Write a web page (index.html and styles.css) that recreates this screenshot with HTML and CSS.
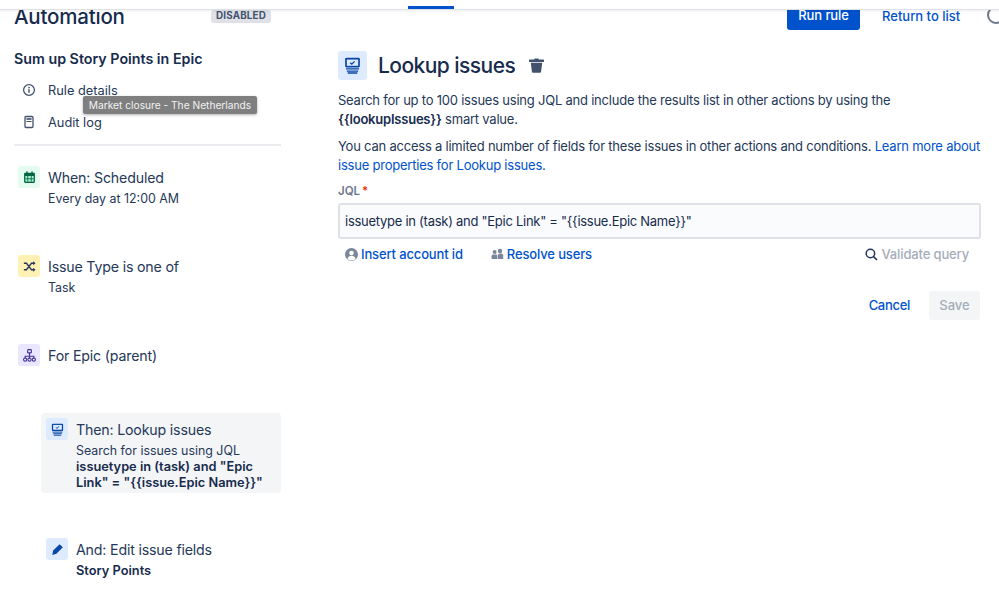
FILE: index.html
```html
<!DOCTYPE html>
<html lang="en">
<head>
<meta charset="utf-8">
<title>Automation</title>
<link rel="stylesheet" href="styles.css">
</head>
<body>
<div class="app">
  <header class="topbar"><span class="tab"></span></header>
  <div class="columns">
    <aside class="sidebar">
      <div class="side-head">
        <h1 class="app-title">Automation</h1>
        <span class="badge">DISABLED</span>
      </div>
      <h2 class="rule-name">Sum up Story Points in Epic</h2>
      <nav class="side-nav">
        <a class="nav-item">
          <svg class="nav-icon" viewBox="0 0 14 14"><circle cx="7" cy="7" r="5.4" fill="none" stroke="#42526e" stroke-width="1.3"/><rect x="6.3" y="6.2" width="1.4" height="3.6" fill="#42526e"/><circle cx="7" cy="4.6" r=".85" fill="#42526e"/></svg>
          <span>Rule details</span>
        </a>
        <a class="nav-item">
          <svg class="nav-icon" viewBox="0 0 14 14"><rect x="3" y="1.5" width="8" height="11" rx="1" fill="none" stroke="#42526e" stroke-width="1.3"/><rect x="4.4" y="3.2" width="5.2" height="1.6" fill="#42526e"/><rect x="4.4" y="6" width="5.2" height="1" fill="#42526e"/></svg>
          <span>Audit log</span>
        </a>
      </nav>
      <ol class="steps">
        <li class="step">
          <span class="step-icon green"><svg viewBox="0 0 12 12"><rect x="1" y="1.6" width="10" height="9.4" rx="1" fill="#006644"/><rect x="3" y=".4" width="1.3" height="2.4" fill="#006644"/><rect x="7.7" y=".4" width="1.3" height="2.4" fill="#006644"/><rect x="2.2" y="4.6" width="7.6" height="5.2" fill="#abf5d1"/><path d="M4.4 4.6v5.2M7.6 4.6v5.2M2.2 7.2h7.6" stroke="#006644" stroke-width=".8"/></svg></span>
          <div class="step-body">
            <div class="step-title">When: Scheduled</div>
            <div class="step-sub">Every day at 12:00 AM</div>
          </div>
        </li>
        <li class="step">
          <span class="step-icon yellow"><svg viewBox="0 0 12 12"><path d="M.8 3h2.4l4.6 6h2.4M.8 9h2.4l4.6-6h2.4" fill="none" stroke="#253858" stroke-width="1.2"/><path d="M9.4 1.2 11.6 3 9.4 4.8zM9.4 7.2 11.6 9 9.4 10.8z" fill="#253858"/></svg></span>
          <div class="step-body">
            <div class="step-title">Issue Type is one of</div>
            <div class="step-sub">Task</div>
          </div>
        </li>
        <li class="step short">
          <span class="step-icon purple"><svg viewBox="0 0 12 12"><path d="M6 3.5v3M2 9V6.7h8V9M6 6.5V9" fill="none" stroke="#403294" stroke-width="1"/><rect x="4.3" y=".6" width="3.4" height="3" rx=".7" fill="none" stroke="#403294" stroke-width="1"/><circle cx="2" cy="9.8" r="1.5" fill="none" stroke="#403294" stroke-width="1"/><circle cx="6" cy="9.8" r="1.5" fill="none" stroke="#403294" stroke-width="1"/><circle cx="10" cy="9.8" r="1.5" fill="none" stroke="#403294" stroke-width="1"/></svg></span>
          <div class="step-body">
            <div class="step-title">For Epic (parent)</div>
          </div>
        </li>
        <li class="step nested active">
          <span class="step-icon blue"><svg viewBox="0 0 12 12"><rect x=".8" y=".6" width="10.4" height="6.8" rx="1" fill="#0747a6"/><rect x="2" y="1.8" width="8" height="4.4" fill="#deebff"/><path d="m4.4 4 1.1 1 2-1.9" fill="none" stroke="#0747a6" stroke-width=".9"/><path d="M1.4 8.4h9.2M2 9.9h8M2.6 11.3h6.8" stroke="#0747a6" stroke-width=".9"/></svg></span>
          <div class="step-body">
            <div class="step-title">Then: Lookup issues</div>
            <div class="step-sub">Search for issues using JQL<br><b>issuetype in (task) and "Epic Link" = "{{issue.Epic Name}}"</b></div>
          </div>
        </li>
        <li class="step nested">
          <span class="step-icon blue"><svg viewBox="0 0 12 12"><path d="M7.9 1.1 10.9 4 5 9.9 1.2 11 2 7z" fill="#0747a6"/></svg></span>
          <div class="step-body">
            <div class="step-title">And: Edit issue fields</div>
            <div class="step-sub"><b>Story Points</b></div>
          </div>
        </li>
      </ol>
    </aside>
    <main class="content">
      <div class="actions">
        <button class="btn-primary">Run rule</button>
        <a class="link return">Return to list</a>
        <span class="spinner"></span>
      </div>
      <div class="panel">
        <div class="panel-head">
          <span class="panel-icon"><svg viewBox="0 0 12 12"><rect x=".8" y=".6" width="10.4" height="6.8" rx="1" fill="#0747a6"/><rect x="2" y="1.8" width="8" height="4.4" fill="#deebff"/><path d="m4.4 4 1.1 1 2-1.9" fill="none" stroke="#0747a6" stroke-width=".9"/><path d="M1.4 8.4h9.2M2 9.9h8M2.6 11.3h6.8" stroke="#0747a6" stroke-width=".9"/></svg></span>
          <h2 class="panel-title">Lookup issues</h2>
          <svg class="trash" viewBox="0 0 15 15"><path d="M5.2 1.5 5.8.4h3.4l.6 1.1h4.4a.6.6 0 0 1 0 2.4H.8a.6.6 0 0 1 0-2.4z" fill="#42526e"/><path d="M1.8 4.8h11.4l-1.1 9a1.2 1.2 0 0 1-1.2 1H4.1a1.2 1.2 0 0 1-1.2-1z" fill="#42526e"/></svg>
        </div>
        <p class="para">Search for up to 100 issues using JQL and include the results list in other actions by using the <b>{{lookupIssues}}</b> smart value.</p>
        <p class="para">You can access a limited number of fields for these issues in other actions and conditions. <a class="link">Learn more about issue properties for Lookup issues.</a></p>
        <label class="field-label">JQL<span class="req">*</span></label>
        <div class="input">issuetype in (task) and "Epic Link" = "{{issue.Epic Name}}"</div>
        <div class="tools">
          <a class="tool link">
            <svg class="tool-icon" viewBox="0 0 13 13"><circle cx="6.5" cy="6.5" r="6.5" fill="#7a869a"/><circle cx="6.5" cy="5" r="2.3" fill="#fff"/><path d="M2.5 11c.5-2.4 2-3.2 4-3.2s3.5.8 4 3.2a6 6 0 0 1-8 0z" fill="#fff"/></svg>
            Insert account id
          </a>
          <a class="tool link users">
            <svg class="tool-icon" viewBox="0 0 13 13"><circle cx="3.6" cy="4" r="2" fill="#7a869a"/><circle cx="9" cy="3" r="2.2" fill="#7a869a"/><path d="M.6 11V8.2c0-1 .8-1.8 1.8-1.8h2.4c1 0 1.6.8 1.6 1.8V11z" fill="#7a869a"/><path d="M7 11V7.2c0-1 .8-1.8 1.8-1.8h1.4c1.2 0 2 .8 2 1.8V11z" fill="#7a869a"/></svg>
            Resolve users
          </a>
          <a class="tool validate">
            <svg class="tool-icon" viewBox="0 0 12 12"><circle cx="5" cy="5" r="3.9" fill="none" stroke="#253858" stroke-width="1.4"/><path d="m7.9 7.9 3.2 3.2" stroke="#253858" stroke-width="1.5"/></svg>
            Validate query
          </a>
        </div>
        <div class="form-actions">
          <a class="link cancel">Cancel</a>
          <button class="btn-save">Save</button>
        </div>
      </div>
    </main>
  </div>
  <div class="tooltip">Market closure - The Netherlands</div>
</div>
</body>
</html>
```
FILE: styles.css
```css
* { box-sizing: border-box; }
html, body { margin: 0; height: 100%; }
body {
  font-family: Inter, "Liberation Sans", sans-serif;
  color: #172b4d;
  background: #fff;
  overflow: hidden;
}
.app { position: relative; width: 999px; height: 613px; overflow: hidden; }
.topbar {
  position: relative;
  z-index: 2;
  height: 10px;
  background: #fff;
  border-bottom: 1px solid #dfe1e6;
  box-shadow: 0 1px 2px rgba(9, 30, 66, .08);
  display: flex;
  justify-content: flex-start;
  align-items: flex-end;
  padding-left: 408px;
}
.tab { width: 46px; height: 3px; background: #0052cc; }
.columns { display: flex; height: 603px; }
.sidebar { width: 281px; flex: none; padding-left: 14px; }
.side-head { height: 34px; display: flex; justify-content: space-between; width: 257px; position: relative; }
.app-title {
  margin: -5px 0 0;
  font-size: 20.5px;
  line-height: 24px;
  font-weight: 500;
  letter-spacing: -.2px;
}
.badge {
  width: 60px;
  height: 13px;
  border-radius: 3px;
  background: #dfe1e6;
  color: #42526e;
  font-size: 9.8px;
  line-height: 12px;
  font-weight: 700;
  text-align: center;
  letter-spacing: .2px;
}
.rule-name {
  margin: 6px 0 0;
  font-size: 14.25px;
  line-height: 18px;
  font-weight: 600;
}
.side-nav {
  margin-top: 12px;
  height: 66px;
  border-bottom: 2px solid #ebecf0;
  display: flex;
  flex-direction: column;
  gap: 12px;
}
.nav-item { display: flex; align-items: center; gap: 12px; padding-left: 8px; height: 20px; font-size: 12.8px; color: #253858; }
.nav-icon { width: 14px; height: 14px; flex: none; }
.steps { list-style: none; margin: 20px 0 0 4px; padding: 0; }
.step { display: flex; gap: 8px; height: 89px; }
.step.short { height: 69px; }
.step.nested { margin-left: 23px; padding: 5px 0 0 5px; height: 120px; }
.step.active { position: relative; }
.step.active::before {
  content: "";
  position: absolute;
  inset: 0 0 40px 0;
  background: #f4f5f7;
  border-radius: 4px;
}
.step.active > * { position: relative; }
.step-icon {
  width: 22px;
  height: 22px;
  flex: none;
  border-radius: 3px;
  display: flex;
  align-items: center;
  justify-content: center;
}
.step-icon svg { width: 13px; height: 13px; }
.green { background: #e3fcef; }
.yellow { background: #fff0b3; }
.purple { background: #eae6ff; }
.blue { background: #deebff; }
.step-title { font-size: 14.2px; line-height: 20px; margin-top: 2px; letter-spacing: -.18px; color: #253858; }
.step-sub { font-size: 12.4px; line-height: 16px; margin-top: 3px; color: #253858; width: 200px; }
.step-sub b { font-size: 12.8px; font-weight: 600; color: #172b4d; }
.content { width: 718px; flex: none; padding-left: 57px; }
.actions { height: 40px; margin-top: -10px; display: flex; align-items: flex-start; position: relative; padding-left: 449px; }
.btn-primary {
  width: 73px;
  height: 30px;
  margin: 0;
  padding: 0;
  border: 0;
  border-radius: 0 0 3px 3px;
  background: #0052cc;
  color: #fff;
  font: 500 13px/20px Inter, "Liberation Sans", sans-serif;
  letter-spacing: -.1px;
}
.link { color: #0052cc; }
.return { margin: 7px 0 0 22px; font-size: 13px; line-height: 18px; white-space: nowrap; font-weight: 500; }
.spinner {
  position: absolute;
  left: 649px;
  top: 6px;
  width: 18px;
  height: 18px;
  border: 2px solid #6b778c;
  border-radius: 50%;
}
.panel { width: 643px; padding-top: 11px; }
.panel-head { display: flex; align-items: center; height: 29px; }
.panel-icon { width: 29px; height: 29px; border-radius: 3px; background: #deebff; display: flex; align-items: center; justify-content: center; }
.panel-icon svg { width: 17px; height: 17px; }
.panel-title { margin: 0 0 0 11px; font-size: 21px; line-height: 31px; font-weight: 500; letter-spacing: -.55px; }
.trash { width: 15px; height: 15px; margin-left: 14px; }
.para { margin: 0; font-size: 13px; line-height: 19px; letter-spacing: -.22px; color: #253858; }
.para b { font-weight: 600; color: #172b4d; }
.panel-head + .para { margin-top: 11px; }
.para + .para { margin-top: 8px; }
.field-label { display: block; margin-top: 8px; font-size: 11.5px; line-height: 16px; font-weight: 600; color: #6b778c; }
.req { color: #de350b; margin-left: 2px; }
.input {
  margin-top: 4px;
  height: 36px;
  padding: 0 5px;
  border: 2px solid #dfe1e6;
  border-radius: 3px;
  background: #fafbfc;
  font-size: 13px;
  line-height: 32px;
  letter-spacing: -.27px;
  color: #172b4d;
}
.tools { display: flex; align-items: center; height: 30px; padding-left: 7px; font-size: 13px; font-weight: 500; letter-spacing: -.14px; }
.tool { display: flex; align-items: center; gap: 3px; }
.tool-icon { width: 13px; height: 13px; flex: none; }
.users { margin-left: 28px; }
.validate { margin-left: auto; margin-right: 12px; gap: 3px; color: #a5adba; }
.form-actions { display: flex; justify-content: flex-end; align-items: center; gap: 19px; margin-top: 22px; padding-right: 1px; font-size: 13px; font-weight: 500; letter-spacing: -.3px; }
.cancel { margin-bottom: 1px; }
.btn-save {
  width: 51px;
  height: 29px;
  padding: 0 0 1px;
  border: 0;
  border-radius: 3px;
  background: #f4f5f7;
  color: #a5adba;
  font: 500 13px/20px Inter, "Liberation Sans", sans-serif;
}
.tooltip {
  position: absolute;
  left: 83px;
  top: 96px;
  width: 174px;
  height: 18px;
  background: #7f7f7f;
  color: #f2f2f2;
  font-size: 10.2px;
  line-height: 18px;
  text-align: center;
  border-radius: 2px;
  box-shadow: 0 1px 3px rgba(0, 0, 0, .3);
}
```
